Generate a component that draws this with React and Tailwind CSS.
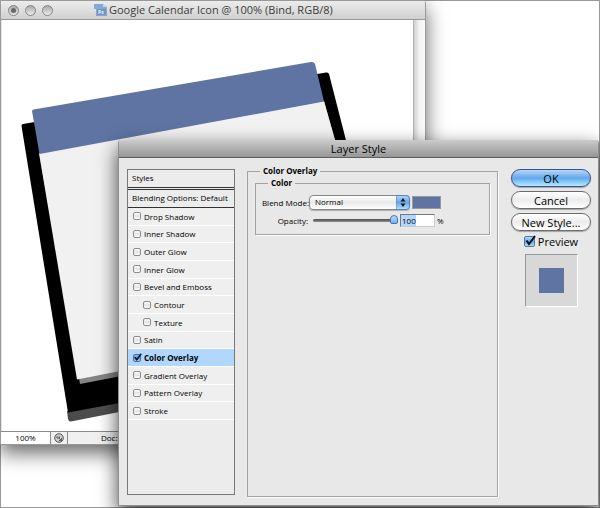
import React from "react";

const effects = [
  { name: "Drop Shadow" },
  { name: "Inner Shadow" },
  { name: "Outer Glow" },
  { name: "Inner Glow" },
  { name: "Bevel and Emboss" },
  { name: "Contour", nested: true },
  { name: "Texture", nested: true },
  { name: "Satin" },
  { name: "Color Overlay", on: true },
  { name: "Gradient Overlay" },
  { name: "Pattern Overlay" },
  { name: "Stroke" },
];

function Tick({ className }) {
  return (
    <svg viewBox="0 0 12 12" className={className} fill="none" stroke="#0a0f18" strokeWidth="2" aria-hidden="true">
      <path d="M2.5 5.5 L5 9 L11 1" />
    </svg>
  );
}

function Artwork() {
  return (
    <svg
      viewBox="2 20 411 411"
      preserveAspectRatio="xMinYMin slice"
      className="block h-[411px] w-full"
      role="img"
      aria-label="Calendar artwork"
    >
      <defs>
        <linearGradient id="edge" x1="0" x2="1">
          <stop offset="0" stopColor="#4a4a4a" />
          <stop offset="1" stopColor="#6a6a6a" />
        </linearGradient>
      </defs>
      <path d="M67 411 L346 358 L348 367 L71 421.500 Q69 422 68 419 Z" fill="url(#edge)" />
      <path d="M23 124 L326 72.500 Q328.500 72 329 74 L400 351 L68 412.500 L21.500 126 Q21.500 124 23 124 Z" fill="#000" />
      <path d="M39 153 L324 101 L386 325 L80 384 Z" fill="#848484" />
      <path d="M39 153 L324 101 L386 319 L77 379.500 Z" fill="#f1f1f1" />
      <path d="M33.500 109.500 L311 62 Q314 61.500 315 64 L324 101.500 L39.500 154 L32 111 Q32 110 33.500 109.500 Z" fill="#5f74a3" />
    </svg>
  );
}

function WindowButton({ label, dot }) {
  return (
    <button
      type="button"
      aria-label={label}
      className="flex size-[11px] items-center justify-center rounded-full border border-[#858585] bg-linear-to-b from-[#a9a9a9] to-[#ececec]"
    >
      {dot && <span className="size-[5px] rounded-full bg-[#686868]" />}
    </button>
  );
}

function DocumentWindow() {
  return (
    <section className="absolute top-0 left-0 w-[426px] rounded-tr-[3px] border border-[#999] bg-white shadow-[0_8px_20px_rgba(0,0,0,0.6)]">
      <header className="flex h-[19px] items-center border-b border-[#9a9a9a] bg-linear-to-b from-[#ececec] to-[#d0d0d0] pl-[7px]">
        <div className="flex gap-[6px]">
          <WindowButton label="Close" dot />
          <WindowButton label="Minimize" />
          <WindowButton label="Zoom" />
        </div>
        <svg viewBox="0 0 13 14" className="ml-[41px] h-[14px] w-[13px] shrink-0" aria-hidden="true">
          <path d="M0 1 H9 L13 4 V13 H2 V6 H0 Z" fill="#86a9d0" />
          <path d="M9 1 L9 4 H13 Z" fill="#c5d9ee" />
          <path d="M3 6 h9 v6 h-9 z" fill="#6f97c6" />
          <text x="4" y="11" fontSize="5" fontWeight="700" fontFamily="Open Sans, sans-serif" fill="#e6f0fa">Ps</text>
        </svg>
        <h1 className="ml-[2px] text-[11px] leading-[14px] whitespace-nowrap text-[#3c3c3c]">
          Google Calendar Icon @ 100% (Bind, RGB/8)
        </h1>
      </header>
      <div className="flex">
        <div className="min-w-0 flex-1 border-l border-[#e4e4e4]">
          <Artwork />
        </div>
        <div className="w-[12px] border-l border-[#b0b0b0] bg-linear-to-r from-[#d0d0d0] via-[#f4f4f4] to-[#fafafa]" />
      </div>
      <footer className="flex h-[13px] items-center border-t border-[#8a8a8a] bg-[#f0f0f0] text-[8px] leading-[12px] text-black">
        <span className="h-full w-[50px] border-r border-[#8a8a8a] bg-white text-center">100%</span>
        <button type="button" aria-label="Status options" className="flex h-full w-[17px] items-center justify-center border-r border-[#8a8a8a]">
          <svg viewBox="0 0 10 10" className="size-[10px]" fill="none" stroke="#555" aria-hidden="true">
            <circle cx="5" cy="5" r="4.300" fill="#ccc" />
            <path d="M3 3 V5 H5.500 V3.500 M4.500 4.500 L7.500 7.500 M7.500 5 V7.500 H5" strokeWidth=".9" />
          </svg>
        </button>
        <span className="pl-[33px]">Doc:</span>
      </footer>
    </section>
  );
}

function EffectRow({ name, nested, on }) {
  return (
    <li className={`flex border-b border-white ${on ? "bg-[#b2d7ff] font-bold" : "bg-[#efefef]"}`}>
      <label className={`flex flex-1 items-center gap-[3px] ${nested ? "pl-[15px]" : "pl-[5px]"}`}>
        <span className="relative flex">
          <input
            type="checkbox"
            defaultChecked={on}
            className="size-[8px] appearance-none rounded-[2px] border border-[#8c8c8c] bg-linear-to-b from-white via-[#e2e2e2] to-white checked:border-[#4b6f9f] checked:from-[#8dbdf0] checked:via-[#5b98dd] checked:to-[#a5d6fb]"
          />
          {on && <Tick className="pointer-events-none absolute -top-px left-0 size-[9px]" />}
        </span>
        {name}
      </label>
    </li>
  );
}

function StyleList() {
  return (
    <nav aria-label="Styles" className="min-h-[326px] w-[108px] shrink-0 border border-[#777] bg-[#ececec]">
      <h3 className="h-[18px] border-b border-[#333] pl-[4px] leading-[15px]">Styles</h3>
      <button type="button" className="mt-px flex h-[19px] w-full items-start border-y border-[#333] pl-[4px] text-left leading-[15px]">
        Blending Options: Default
      </button>
      <ul className="grid h-[212px] auto-rows-fr">
        {effects.map((effect) => (
          <EffectRow key={effect.name} {...effect} />
        ))}
      </ul>
    </nav>
  );
}

function OverlaySettings() {
  return (
    <fieldset className="min-w-0 flex-1 border border-[#a2a2a2] px-[7px] pb-[8px] shadow-[1px_1px_0_#fff]">
      <legend className="ml-[5px] px-[3px] text-[8px] leading-[10px] font-bold">Color Overlay</legend>
      <fieldset className="mt-[2px] min-w-0 border border-[#a2a2a2] pb-[7px] shadow-[1px_1px_0_#fff]">
        <legend className="ml-[12px] px-[3px] text-[8px] leading-[10px] font-bold">Color</legend>
        <div className="mt-[6px] flex h-[16px] items-center">
          <label htmlFor="blend" className="w-[53px] text-right whitespace-nowrap">Blend Mode:</label>
          <div className="relative h-[15px] w-[101px]">
            <select
              id="blend"
              className="block h-full w-full appearance-none rounded-[4px] border border-[#858585] bg-linear-to-b from-white via-[#e9e9e9] to-white pl-[5px] text-[8px] leading-[12px] shadow-[0_1px_1px_rgba(0,0,0,0.25)]"
            >
              <option>Normal</option>
            </select>
            <svg viewBox="0 0 14 15" className="pointer-events-none absolute top-0 right-0 h-[15px] w-[14px]" aria-hidden="true">
              <defs>
                <linearGradient id="aqua" x1="0" y1="0" x2="0" y2="1">
                  <stop offset="0" stopColor="#b4d4f6" />
                  <stop offset=".5" stopColor="#69a6e7" />
                  <stop offset="1" stopColor="#b2e4ff" />
                </linearGradient>
              </defs>
              <path d="M0 .5 H10 Q13.500 .5 13.500 4 V11 Q13.500 14.500 10 14.500 H0 Z" fill="url(#aqua)" stroke="#4a6ea8" strokeWidth=".7" />
              <path d="M7 3 L9.500 6.500 H4.500 Z M7 12 L4.500 8.500 H9.500 Z" fill="#101820" />
            </svg>
          </div>
          <button type="button" aria-label="Overlay color" className="ml-[2px] h-[13px] w-[29px] border border-[#999] bg-[#5f74a3]" />
        </div>
        <div className="mt-[3px] flex h-[14px] items-center">
          <label htmlFor="opacity" className="w-[52px] text-right">Opacity:</label>
          <input
            id="opacity"
            type="range"
            defaultValue="100"
            className="ml-[5px] h-[10px] w-[85px] appearance-none bg-transparent [&::-webkit-slider-runnable-track]:h-[3px] [&::-webkit-slider-runnable-track]:rounded-full [&::-webkit-slider-runnable-track]:bg-linear-to-b [&::-webkit-slider-runnable-track]:from-[#4c4c4c] [&::-webkit-slider-runnable-track]:to-[#909090] [&::-webkit-slider-thumb]:-mt-[4px] [&::-webkit-slider-thumb]:h-[9px] [&::-webkit-slider-thumb]:w-[8px] [&::-webkit-slider-thumb]:appearance-none [&::-webkit-slider-thumb]:rounded-t-[4px] [&::-webkit-slider-thumb]:rounded-b-[2px] [&::-webkit-slider-thumb]:border [&::-webkit-slider-thumb]:border-[#4a73a8] [&::-webkit-slider-thumb]:bg-linear-to-b [&::-webkit-slider-thumb]:from-[#bcdcf8] [&::-webkit-slider-thumb]:to-[#6fb4ee]"
          />
          <input
            type="text"
            aria-label="Opacity percent"
            defaultValue="100"
            className="ml-[2px] h-[13px] w-[35px] border border-t-[#777] border-r-[#ccc] border-b-[#ccc] border-l-[#777] bg-linear-to-r from-[#b2d7ff] from-[15px] to-white to-[15px] pl-px text-[8px] leading-[11px]"
          />
          <span className="ml-[2px]">%</span>
        </div>
      </fieldset>
    </fieldset>
  );
}

function PillButton({ children, primary }) {
  const tone = primary
    ? "border-[#3a5390] from-[#b9d7f7] via-[#5fa8ec] to-[#b4ecff]"
    : "border-[#6c6c6c] from-white via-[#ececec] to-white";
  return (
    <button
      type="button"
      className={`h-[18px] w-full rounded-full border bg-linear-to-b text-[11px] leading-[15px] font-medium whitespace-nowrap shadow-[0_1px_1px_rgba(0,0,0,0.3)] ${tone}`}
    >
      {children}
    </button>
  );
}

function DialogActions() {
  return (
    <aside className="flex w-[80px] shrink-0 flex-col items-center">
      <div className="flex w-full flex-col gap-[4px]">
        <PillButton primary>OK</PillButton>
        <PillButton>Cancel</PillButton>
        <PillButton>New Style...</PillButton>
      </div>
      <label className="mt-[3px] flex h-[15px] items-center gap-[3px] text-[11px] leading-[15px] font-medium">
        <span className="relative flex">
          <input
            type="checkbox"
            defaultChecked
            className="size-[11px] appearance-none rounded-[2px] border border-[#55779f] bg-linear-to-b from-[#b8d8f8] via-[#65a6e9] to-[#a8e0ff]"
          />
          <Tick className="pointer-events-none absolute -top-px left-0 size-[12px]" />
        </span>
        Preview
      </label>
      <div className="mt-[5px] flex size-[53px] items-center justify-center border border-t-[#999] border-r-white border-b-white border-l-[#999] bg-[#d8d8d8]">
        <div className="size-[25px] bg-[#5f74a3]" />
      </div>
    </aside>
  );
}

function LayerStyleDialog() {
  return (
    <section
      role="dialog"
      aria-labelledby="dialog-title"
      className="absolute top-[140px] right-px left-[118px] rounded-t-[4px] border border-t-0 border-[#8e8e8e] bg-[#e8e8e8] shadow-[0_8px_20px_rgba(0,0,0,0.75)]"
    >
      <header className="flex h-[18px] items-center justify-center rounded-t-[4px] border-b border-[#5f5f5f] bg-linear-to-b from-[#cbcbcb] to-[#979797]">
        <h2 id="dialog-title" className="text-[11px] leading-[15px] font-medium">Layer Style</h2>
      </header>
      <div className="flex items-start pt-[11px] pr-[7px] pb-[8px] pl-[8px]">
        <StyleList />
        <div className="-mt-[3px] mr-[13px] ml-[12px] flex min-h-[331px] min-w-0 flex-1">
          <OverlaySettings />
        </div>
        <DialogActions />
      </div>
    </section>
  );
}

export default function App() {
  return (
    <main className="relative h-screen min-h-[508px] w-full overflow-hidden bg-white font-['Open_Sans',sans-serif] text-[8px] leading-[11px] text-black shadow-[inset_0_0_0_1px_#999]">
      <DocumentWindow />
      <LayerStyleDialog />
    </main>
  );
}
